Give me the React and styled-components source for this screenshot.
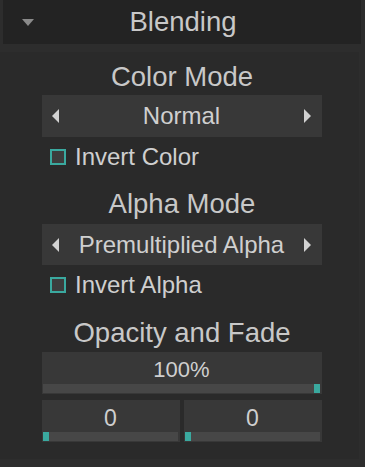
import React from "react";
import styled, { createGlobalStyle } from "styled-components";

const GlobalStyle = createGlobalStyle`
  html, body {
    margin: 0;
    padding: 0;
    background: #2d2d2d;
  }
  body {
    width: 365px;
    height: 467px;
    overflow: hidden;
    font-family: "Liberation Sans", Arial, sans-serif;
    color: #c8c8c8;
  }
`;

const Frame = styled.div`
  width: 365px;
  height: 467px;
  display: flex;
  flex-direction: column;
`;

const Header = styled.div`
  height: 44px;
  margin: 0 4px 0 3px;
  background: #232323;
  display: flex;
  align-items: center;
  position: relative;
`;

const Caret = styled.span`
  position: absolute;
  left: 19px;
  top: 19px;
  width: 0;
  height: 0;
  border-left: 6px solid transparent;
  border-right: 6px solid transparent;
  border-top: 7px solid #8a8a8a;
`;

const HeaderTitle = styled.div`
  flex: 1;
  text-align: center;
  font-size: 27.5px;
  line-height: 44px;
  padding-left: 2px;
  color: #c8c8c8;
`;

const Panel = styled.div`
  margin-top: 8px;
  width: 359px;
  height: 407px;
  background: #2a2a2a;
  padding: 9px 0 0 42px;
  box-sizing: border-box;
  display: flex;
  flex-direction: column;
`;

const Column = styled.div`
  width: 280px;
  display: flex;
  flex-direction: column;
`;

const Title = styled.div`
  height: 32px;
  line-height: 32px;
  font-size: 27.5px;
  text-align: center;
  margin-top: ${({ $top }) => $top || 0}px;
  white-space: nowrap;
`;

const Selector = styled.div`
  height: ${({ $h }) => $h || 42}px;
  margin-top: ${({ $top }) => $top || 0}px;
  background: #383838;
  display: flex;
  align-items: center;
  justify-content: space-between;
  padding: 0 11px 0 10px;
  font-size: 24px;
  color: #cfcfcf;
  white-space: nowrap;
`;

const Arrow = styled.span`
  width: 0;
  height: 0;
  border-top: 7px solid transparent;
  border-bottom: 7px solid transparent;
  ${({ $dir }) =>
    $dir === "left"
      ? "border-right: 7px solid #d2d2d2;"
      : "border-left: 7px solid #d2d2d2;"}
`;

const CheckRow = styled.label`
  height: 24px;
  margin-top: 8px;
  padding-left: 8px;
  display: flex;
  align-items: center;
  gap: 9px;
  font-size: 24px;
  color: #cfcfcf;
`;

const Box = styled.span`
  width: 12px;
  height: 12px;
  border: 2px solid #3aa99f;
  background: #3d3d3d;
  flex-shrink: 0;
`;

const Slider = styled.div`
  height: 42px;
  background: #383838;
  display: flex;
  flex-direction: column;
  padding: 0 2px 1px 1px;
  box-sizing: border-box;
  ${({ $grow }) => ($grow ? "flex: 1;" : "")}
`;

const SliderValue = styled.div`
  flex: 1;
  min-height: 0;
  text-align: center;
  font-size: ${({ $size }) => $size || 22}px;
  line-height: 36px;
  color: #cfcfcf;
`;

const Track = styled.div`
  height: 9px;
  flex-shrink: 0;
  background: #474747;
  display: flex;
  justify-content: ${({ $end }) => ($end ? "flex-end" : "flex-start")};
`;

const Thumb = styled.div`
  width: 6px;
  height: 100%;
  background: #3aa99f;
`;

const Pair = styled.div`
  display: flex;
  gap: 4px;
  margin-top: 6px;
`;

const Top = styled.div`
  margin-top: ${({ $top }) => $top || 0}px;
`;

function Select({ value, top, h }) {
  return (
    <Selector $top={top} $h={h}>
      <Arrow $dir="left" />
      <span>{value}</span>
      <Arrow $dir="right" />
    </Selector>
  );
}

function ValueSlider({ value, end, size, grow }) {
  return (
    <Slider $grow={grow}>
      <SliderValue $size={size}>{value}</SliderValue>
      <Track $end={end}>
        <Thumb />
      </Track>
    </Slider>
  );
}

export default function App() {
  return (
    <>
      <GlobalStyle />
      <Frame>
        <Header>
          <Caret />
          <HeaderTitle>Blending</HeaderTitle>
        </Header>
        <Panel>
          <Column>
            <Title>Color Mode</Title>
            <Select value="Normal" top={2} />
            <CheckRow>
              <Box />
              Invert Color
            </CheckRow>

            <Title $top={19}>Alpha Mode</Title>
            <Select value="Premultiplied Alpha" top={4} h={41} />
            <CheckRow>
              <Box />
              Invert Alpha
            </CheckRow>

            <Title $top={20}>Opacity and Fade</Title>
            <Top $top={3}>
              <ValueSlider value="100%" end size={22} />
            </Top>
            <Pair>
              <ValueSlider value="0" grow size={23} />
              <ValueSlider value="0" grow size={23} />
            </Pair>
          </Column>
        </Panel>
      </Frame>
    </>
  );
}
